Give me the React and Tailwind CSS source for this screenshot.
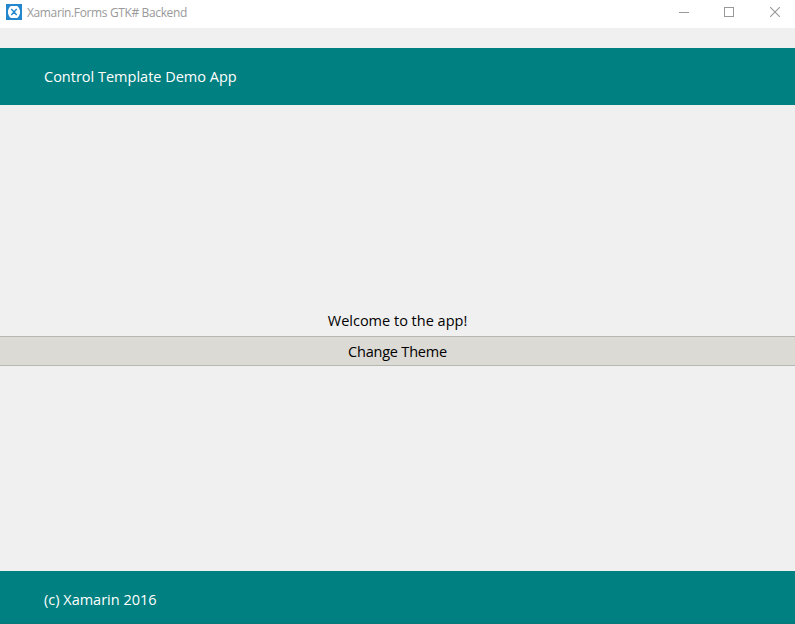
function AppIcon() {
  return (
    <svg className="h-4 w-4 shrink-0" viewBox="0 0 16 16">
      <rect width="16" height="16" fill="#2387ce" />
      <path d="M4.600 2h6.800L13 4l1 2.500v3L13 12l-1.600 2H4.600L3 12 2 9.500V6.500L3 4z" fill="#fff" />
      <path d="M5.300 5 8 8l-2.700 3M10.700 5 8 8l2.700 3" fill="none" stroke="#2387ce" strokeWidth="1.400" />
    </svg>
  );
}

function TitleBar() {
  return (
    <div className="flex h-7 shrink-0 items-start bg-white">
      <div className="flex flex-1 gap-[5px] pl-1.5 pt-1">
        <AppIcon />
        <span className="whitespace-pre text-[12px] leading-[18px] tracking-[-0.37px] text-[#999999]">Xamarin.Forms GTK# Backend</span>
      </div>
      <div className="flex gap-[35px] pr-[15px] pt-[7px] text-[#999999]">
        <svg className="h-[11px] w-[10px]" viewBox="0 0 10 11">
          <path d="M0 5.5h10" stroke="currentColor" />
        </svg>
        <svg className="h-[10px] w-[10px]" viewBox="0 0 10 10">
          <rect x=".5" y=".5" width="9" height="9" fill="none" stroke="currentColor" />
        </svg>
        <svg className="ml-px h-[10px] w-[10px]" viewBox="0 0 10 10">
          <path d="M0 0l10 10M10 0L0 10" stroke="currentColor" strokeWidth="1.1" />
        </svg>
      </div>
    </div>
  );
}

export default function App() {
  return (
    <div className="flex h-[624px] w-[795px] flex-col overflow-hidden bg-[#f0f0f0] font-['Open_Sans','Noto_Sans',sans-serif] text-[14.5px] leading-5 text-black">
      <TitleBar />
      <header className="mt-5 flex h-[57px] shrink-0 items-center bg-[#008080] pl-11 text-white">
        <span>Control Template Demo App</span>
      </header>
      <main className="flex flex-1 flex-col pt-[206px]">
        <p className="h-[25px] text-center">Welcome to the app!</p>
        <button className="flex h-[30px] items-center justify-center border-y border-[#b7b6b1] bg-[#dcdad5] pt-0.5">
          <span className="tracking-[-0.2px]">Change Theme</span>
        </button>
      </main>
      <footer className="flex h-[53px] shrink-0 items-center border-b border-[#077878] bg-[#008080] pl-11 pt-1.5 text-white">
        <span>(c) Xamarin 2016</span>
      </footer>
    </div>
  );
}
